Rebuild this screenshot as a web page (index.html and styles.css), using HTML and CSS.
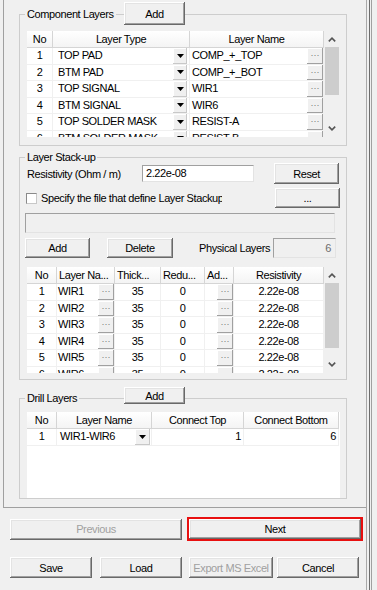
FILE: index.html
```html
<!DOCTYPE html>
<html>
<head>
<meta charset="utf-8">
<link rel="stylesheet" href="styles.css">
</head>
<body>
<div class="app">
  <div class="main">
    <div class="panel">
      <section class="group g-comp">
        <div class="ghead">
          <span class="glabel">Component Layers</span>
          <button class="btn btn-add">Add</button>
        </div>
        <div class="grid grid-comp">
          <div class="gview">
            <div class="hrow cols-comp"><div class="hc">No</div><div class="hc">Layer Type</div><div class="hc">Layer Name</div></div>
            <div class="brow cols-comp"><div class="bc num">1</div><div class="bc split"><span class="txt">TOP PAD</span><span class="dd"><svg width="7" height="4" viewBox="0 0 7 4"><polygon points="0,0 7,0 3.5,4" fill="#000"/></svg></span></div><div class="bc split"><span class="txt t2">COMP_+_TOP</span><span class="ell">···</span></div></div>
            <div class="brow cols-comp"><div class="bc num">2</div><div class="bc split"><span class="txt">BTM PAD</span><span class="dd"><svg width="7" height="4" viewBox="0 0 7 4"><polygon points="0,0 7,0 3.5,4" fill="#000"/></svg></span></div><div class="bc split"><span class="txt t2">COMP_+_BOT</span><span class="ell">···</span></div></div>
            <div class="brow cols-comp"><div class="bc num">3</div><div class="bc split"><span class="txt">TOP SIGNAL</span><span class="dd"><svg width="7" height="4" viewBox="0 0 7 4"><polygon points="0,0 7,0 3.5,4" fill="#000"/></svg></span></div><div class="bc split"><span class="txt t2">WIR1</span><span class="ell">···</span></div></div>
            <div class="brow cols-comp"><div class="bc num">4</div><div class="bc split"><span class="txt">BTM SIGNAL</span><span class="dd"><svg width="7" height="4" viewBox="0 0 7 4"><polygon points="0,0 7,0 3.5,4" fill="#000"/></svg></span></div><div class="bc split"><span class="txt t2">WIR6</span><span class="ell">···</span></div></div>
            <div class="brow cols-comp"><div class="bc num">5</div><div class="bc split"><span class="txt">TOP SOLDER MASK</span><span class="dd"><svg width="7" height="4" viewBox="0 0 7 4"><polygon points="0,0 7,0 3.5,4" fill="#000"/></svg></span></div><div class="bc split"><span class="txt t2">RESIST-A</span><span class="ell">···</span></div></div>
            <div class="brow cols-comp"><div class="bc num">6</div><div class="bc split"><span class="txt">BTM SOLDER MASK</span><span class="dd"><svg width="7" height="4" viewBox="0 0 7 4"><polygon points="0,0 7,0 3.5,4" fill="#000"/></svg></span></div><div class="bc split"><span class="txt t2">RESIST-B</span><span class="ell">···</span></div></div>
          </div>
          <div class="vscroll">
            <div class="sarrow"><svg width="8" height="5" viewBox="0 0 8 5"><polyline points="0.8,4.4 4,1.2 7.2,4.4" fill="none" stroke="#555" stroke-width="1.6"/></svg></div>
            <div class="strack"><div class="thumb thumb-comp"></div></div>
            <div class="sarrow"><svg width="8" height="5" viewBox="0 0 8 5"><polyline points="0.8,0.6 4,3.8 7.2,0.6" fill="none" stroke="#555" stroke-width="1.6"/></svg></div>
          </div>
        </div>
      </section>

      <section class="group g-stack">
        <div class="ghead">
          <span class="glabel">Layer Stack-up</span>
        </div>
        <div class="row-res">
          <span class="res-label">Resistivity (Ohm / m)</span>
          <span class="input res-input">2.22e-08</span>
          <button class="btn btn-reset">Reset</button>
        </div>
        <div class="row-file">
          <span class="check"></span>
          <span class="file-label">Specify the file that define Layer Stackup</span>
          <button class="btn btn-browse">...</button>
        </div>
        <div class="filebox"></div>
        <div class="row-tools">
          <button class="btn btn-sadd">Add</button>
          <button class="btn btn-del">Delete</button>
          <span class="phys-label">Physical Layers</span>
          <span class="phys-input">6</span>
        </div>
        <div class="grid grid-stack">
          <div class="gview">
            <div class="hrow cols-stack"><div class="hc">No</div><div class="hc hl">Layer Na...</div><div class="hc hl">Thick...</div><div class="hc hl">Redu...</div><div class="hc hl">Ad...</div><div class="hc">Resistivity</div></div>
            <div class="brow cols-stack"><div class="bc num">1</div><div class="bc split"><span class="txt t3">WIR1</span><span class="ell">···</span></div><div class="bc num">35</div><div class="bc num">0</div><div class="bc split"><span class="txt"></span><span class="ell">···</span></div><div class="bc num">2.22e-08</div></div>
            <div class="brow cols-stack"><div class="bc num">2</div><div class="bc split"><span class="txt t3">WIR2</span><span class="ell">···</span></div><div class="bc num">35</div><div class="bc num">0</div><div class="bc split"><span class="txt"></span><span class="ell">···</span></div><div class="bc num">2.22e-08</div></div>
            <div class="brow cols-stack"><div class="bc num">3</div><div class="bc split"><span class="txt t3">WIR3</span><span class="ell">···</span></div><div class="bc num">35</div><div class="bc num">0</div><div class="bc split"><span class="txt"></span><span class="ell">···</span></div><div class="bc num">2.22e-08</div></div>
            <div class="brow cols-stack"><div class="bc num">4</div><div class="bc split"><span class="txt t3">WIR4</span><span class="ell">···</span></div><div class="bc num">35</div><div class="bc num">0</div><div class="bc split"><span class="txt"></span><span class="ell">···</span></div><div class="bc num">2.22e-08</div></div>
            <div class="brow cols-stack"><div class="bc num">5</div><div class="bc split"><span class="txt t3">WIR5</span><span class="ell">···</span></div><div class="bc num">35</div><div class="bc num">0</div><div class="bc split"><span class="txt"></span><span class="ell">···</span></div><div class="bc num">2.22e-08</div></div>
            <div class="brow cols-stack"><div class="bc num">6</div><div class="bc split"><span class="txt t3">WIR6</span><span class="ell">···</span></div><div class="bc num">35</div><div class="bc num">0</div><div class="bc split"><span class="txt"></span><span class="ell">···</span></div><div class="bc num">2.22e-08</div></div>
          </div>
          <div class="vscroll">
            <div class="sarrow"><svg width="8" height="5" viewBox="0 0 8 5"><polyline points="0.8,4.4 4,1.2 7.2,4.4" fill="none" stroke="#555" stroke-width="1.6"/></svg></div>
            <div class="strack"><div class="thumb thumb-stack"></div></div>
            <div class="sarrow"><svg width="8" height="5" viewBox="0 0 8 5"><polyline points="0.8,0.6 4,3.8 7.2,0.6" fill="none" stroke="#555" stroke-width="1.6"/></svg></div>
          </div>
        </div>
      </section>

      <section class="group g-drill">
        <div class="ghead">
          <span class="glabel">Drill Layers</span>
          <button class="btn btn-add btn-add-sm">Add</button>
        </div>
        <div class="grid grid-drill">
          <div class="gview">
            <div class="hrow cols-drill"><div class="hc">No</div><div class="hc">Layer Name</div><div class="hc">Connect Top</div><div class="hc">Connect Bottom</div></div>
            <div class="brow cols-drill"><div class="bc num">1</div><div class="bc split"><span class="txt t4">WIR1-WIR6</span><span class="dd dd-drill"><svg width="7" height="4" viewBox="0 0 7 4"><polygon points="0,0 7,0 3.5,4" fill="#000"/></svg></span></div><div class="bc right">1</div><div class="bc right">6</div></div>
          </div>
        </div>
      </section>
    </div>

    <div class="nav-row nav-top">
      <button class="btn btn-prev" disabled>Previous</button>
      <div class="next-wrap"><button class="btn btn-next">Next</button></div>
    </div>
    <div class="nav-row nav-bottom">
      <button class="btn btn-save">Save</button>
      <button class="btn btn-load">Load</button>
      <button class="btn btn-export" disabled>Export MS Excel</button>
      <button class="btn btn-cancel">Cancel</button>
    </div>
  </div>
  <div class="edge"></div>
</div>
</body>
</html>
```

FILE: styles.css
```css
* { box-sizing: border-box; }
html, body { margin: 0; padding: 0; }
body {
  width: 377px;
  height: 590px;
  overflow: hidden;
  background: #f0f0f0;
  font-family: "Liberation Sans", Arial, sans-serif;
  font-size: 11px;
  letter-spacing: -0.4px;
  color: #000;
}
.app { display: flex; height: 590px; }
.main { margin-left: 3px; width: 363px; display: flex; flex-direction: column; }
.edge {
  width: 7px;
  height: 590px;
  background: linear-gradient(to right, #a9a9a9 0 1px, #f0f0f0 1px 3px, #6d6d6d 3px 4px, #f0f0f0 4px 5px, #a0a0a0 5px 6px, #f0f0f0 6px);
}
.panel {
  height: 508px;
  border-left: 1px solid #a0a0a0;
  border-bottom: 1px solid #a0a0a0;
  overflow: hidden;
  padding-top: 14px;
}

/* group boxes */
.group {
  margin-left: 15px;
  width: 328px;
  border: 1px solid #cdcdcd;
  padding: 0 6px 0 7px;
}
.g-comp { padding-bottom: 8px; }
.g-stack { margin-top: 11px; padding: 0 6px 6px 5px; }
.g-drill { margin-top: 18px; padding-bottom: 0; }
.ghead {
  display: grid;
  grid-template-columns: 97px auto;
  align-items: center;
  justify-items: start;
}
.g-comp .ghead { margin-top: -13px; height: 23px; }
.g-stack .ghead { margin-top: -7px; height: 12px; padding-left: 2px; }
.g-drill .ghead { margin-top: -12px; height: 17px; }
.glabel {
  background: #f0f0f0;
  padding: 0 2px;
  margin-left: -2px;
  line-height: 12px;
  white-space: nowrap;
}
.g-drill .glabel { margin-top: 5px; }

/* buttons */
.btn {
  font: inherit;
  letter-spacing: inherit;
  color: #000;
  background: #f0f0f0;
  border: none;
  padding: 0;
  margin: 0;
  box-shadow: inset -1px -1px #696969, inset 1px 1px #fff, inset -2px -2px #a0a0a0, inset 2px 2px #e3e3e3;
  text-align: center;
}
.btn:disabled { color: #a0a0a0; }
.btn-add { width: 61px; height: 23px; }
.btn-add-sm { height: 17px; }

/* grids */
.grid { display: flex; width: 313px; height: 106px; background: #fff; }
.gview { flex: 1; overflow: hidden; background: #fff; }
.grid-comp { margin-top: 6px; }
.grid-stack { margin-top: 9px; margin-left: 2px; }
.grid-drill { margin-top: 8px; height: 86px; }
.cols-comp { grid-template-columns: 26px 137px 134px; }
.cols-stack { grid-template-columns: 30px 58px 46px 44px 29px 90px; }
.cols-drill { grid-template-columns: 30px 95px 92px 95px; }
.hrow { display: grid; height: 17px; }
.hc {
  background: linear-gradient(#ffffff, #f4f4f4);
  border-right: 1px solid #d5d5d5;
  border-bottom: 1px solid #d5d5d5;
  text-align: center;
  line-height: 16px;
  white-space: nowrap;
  overflow: hidden;
}
.hc.hl { text-align: left; padding-left: 2px; }
.brow { display: grid; height: 16.5px; }
.bc {
  border-right: 1px solid #f0f0f0;
  border-bottom: 1px solid #f0f0f0;
  line-height: 15px;
  white-space: nowrap;
  overflow: hidden;
}
.bc.num { text-align: center; }
.bc.right { text-align: right; padding-right: 2px; }
.split { display: flex; }
.txt { flex: 1; padding-left: 5px; overflow: hidden; }
.txt.t2 { padding-left: 2px; }
.txt.t3 { padding-left: 1px; }
.txt.t4 { padding-left: 3px; }
.dd {
  width: 14px;
  margin-right: 2px;
  display: flex;
  align-items: center;
  justify-content: center;
  background: #f0f0f0;
  box-shadow: inset -1px -1px #c8c8c8, inset 1px 1px #fff;
}
.dd-drill { width: 15px; margin-right: 1px; }
.ell {
  width: 16px;
  display: flex;
  align-items: center;
  justify-content: center;
  background: #f0f0f0;
  box-shadow: inset -1px -1px #a0a0a0, inset 1px 1px #fff;
  color: #777;
  font-size: 9px;
  letter-spacing: 0;
}
.vscroll { width: 16px; display: flex; flex-direction: column; background: #f0f0f0; }
.sarrow { height: 16px; display: flex; align-items: center; justify-content: center; }
.sarrow:last-child { height: 17px; }
.strack { flex: 1; padding: 0 1px; }
.thumb { background: #cdcdcd; }
.thumb-comp { margin-top: 0; height: 48px; }
.thumb-stack { margin-top: 0; height: 65px; }

/* stack-up controls */
.row-res { display: flex; align-items: center; height: 21px; }
.res-label { margin-left: 2px; width: 115px; white-space: nowrap; }
.input {
  background: #fff;
  border: 1px solid;
  border-color: #a0a0a0 #e3e3e3 #e3e3e3 #a0a0a0;
  line-height: 15px;
  padding-left: 3px;
}
.res-input { width: 112px; height: 17px; }
.btn-reset { margin-left: 20px; width: 65px; height: 21px; }
.row-file { display: flex; align-items: center; margin-top: 4px; height: 20px; }
.check {
  margin-left: 1px;
  width: 11px;
  height: 11px;
  background: #fff;
  border: 1px solid;
  border-color: #8a8a8a #c8c8c8 #c8c8c8 #8a8a8a;
}
.file-label { margin-left: 4px; width: 181px; overflow: hidden; white-space: nowrap; }
.btn-browse { margin-left: auto; width: 65px; height: 20px; }
.filebox {
  margin-top: 5px;
  width: 310px;
  height: 20px;
  background: #f0f0f0;
  border: 1px solid;
  border-color: #a0a0a0 #e3e3e3 #e3e3e3 #a0a0a0;
}
.row-tools { display: flex; align-items: center; margin-top: 5px; height: 20px; }
.btn-sadd { width: 65px; height: 20px; }
.btn-del { margin-left: 17px; width: 66px; height: 20px; }
.phys-label { margin-left: 26px; width: 74px; white-space: nowrap; }
.phys-input {
  width: 63px;
  height: 20px;
  background: #f0f0f0;
  border: 1px solid;
  border-color: #a0a0a0 #e3e3e3 #e3e3e3 #a0a0a0;
  text-align: right;
  padding-right: 4px;
  line-height: 18px;
  color: #6d6d6d;
}

/* navigation */
.nav-row { display: flex; align-items: center; padding-left: 7px; }
.nav-top { margin-top: 9px; height: 24px; }
.nav-bottom { margin-top: 16px; height: 21px; }
.btn-prev { width: 172px; height: 21px; }
.next-wrap { margin-left: 5px; width: 176px; height: 24px; border: 2px solid #e81010; }
.btn-next { width: 172px; height: 20px; display: block; }
.btn-save { width: 82px; height: 21px; }
.btn-load { margin-left: 8px; width: 82px; height: 21px; }
.btn-export { margin-left: 7px; width: 84px; height: 21px; }
.btn-cancel { margin-left: 4px; width: 82px; height: 21px; }
```
